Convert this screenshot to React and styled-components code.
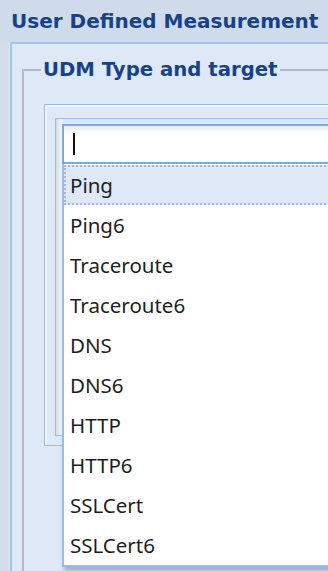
import React from "react";
import styled, { createGlobalStyle } from "styled-components";

const Global = createGlobalStyle`
  html, body {
    margin: 0;
    padding: 0;
    background: #dfe8f6;
  }
  body {
    font-family: "Noto Sans", "Open Sans", sans-serif;
  }
`;

const options = [
  "Ping",
  "Ping6",
  "Traceroute",
  "Traceroute6",
  "DNS",
  "DNS6",
  "HTTP",
  "HTTP6",
  "SSLCert",
  "SSLCert6",
];

export default function App() {
  return (
    <>
      <Global />
      <Page>
        <Header>
          <h1>User Defined Measurement</h1>
        </Header>
        <Body>
          <LeftStrip />
          <Panel>
            <FieldSet>
              <legend>UDM Type and target</legend>
              <OuterBox>
                <InnerBox>
                  <Gutter />
                  <Combo>
                    <Input>
                      <Caret />
                    </Input>
                    <List>
                      {options.map((o, i) => (
                        <Item key={o} selected={i === 0}>
                          {o}
                        </Item>
                      ))}
                    </List>
                  </Combo>
                </InnerBox>
              </OuterBox>
            </FieldSet>
          </Panel>
        </Body>
      </Page>
    </>
  );
}

const Page = styled.div`
  width: 328px;
  height: 571px;
  overflow: hidden;
  display: flex;
  flex-direction: column;
  background: #dfe8f6;
`;

const Header = styled.div`
  height: 42px;
  flex: none;
  background: #cfdbea;
  display: flex;
  align-items: center;
  padding-left: 11px;
  h1 {
    margin: 0;
    font-family: "DejaVu Sans", "Noto Sans", sans-serif;
    font-weight: bold;
    font-size: 20px;
    color: #15428b;
    white-space: nowrap;
  }
`;

const Body = styled.div`
  flex: 1;
  display: flex;
  min-height: 0;
`;

const LeftStrip = styled.div`
  width: 9px;
  flex: none;
  background: #d3dce8;
  border-right: 1px solid #e2e9f3;
`;

const Panel = styled.div`
  flex: 1;
  min-width: 0;
  background: #dfe8f6;
  border-left: 2px solid #a6c4ea;
  border-top: 2px solid #a6c4ea;
  padding: 13px 0 0 10px;
`;

const FieldSet = styled.fieldset`
  margin: 0;
  border: 2px solid #b5b9c6;
  border-right: none;
  border-bottom: none;
  padding: 21px 0 0 20px;
  min-width: 0;
  height: 600px;
  legend {
    margin-left: -3px;
    padding: 0 2px;
    font-family: "DejaVu Sans", "Noto Sans", sans-serif;
    font-weight: bold;
    font-size: 19.7px;
    line-height: 26px;
    color: #15428b;
    white-space: nowrap;
  }
`;

const OuterBox = styled.div`
  height: 342px;
  border: 1px solid #99bbe8;
  border-right: none;
  box-shadow: inset 2px 2px 0 #f1f5fb;
  padding: 13px 0 0 10px;
  box-sizing: border-box;
`;

const InnerBox = styled.div`
  height: 318px;
  box-sizing: border-box;
  border: 1px solid #99bbe8;
  border-right: none;
  display: flex;
  align-items: flex-start;
  padding-top: 5px;
`;

const Gutter = styled.div`
  width: 6px;
  flex: none;
  align-self: stretch;
  margin-top: -5px;
  background: linear-gradient(to right, #d3dae4, #f7f9fc);
`;

const Combo = styled.div`
  position: relative;
  flex: 1;
  margin-right: -20px;
`;

const Input = styled.div`
  height: 36px;
  border: 2px solid #7eaad9;
  background: linear-gradient(to bottom, #e7ecf2 0, #ffffff 9px, #ffffff 100%);
  display: flex;
  align-items: center;
  padding-left: 9px;
`;

const Caret = styled.span`
  width: 2px;
  height: 22px;
  background: #111;
`;

const List = styled.div`
  position: absolute;
  top: 100%;
  left: 0;
  right: 0;
  background: #fff;
  border: 2px solid #99bbe8;
  border-top: none;
  padding-top: 1px;
  box-shadow: 2px 4px 4px rgba(0, 0, 0, 0.25);
`;

const Item = styled.div`
  height: 40px;
  box-sizing: border-box;
  display: flex;
  align-items: center;
  padding-left: 4px;
  font-family: "Noto Sans", "Open Sans", sans-serif;
  font-size: 20.5px;
  color: #1e1e1e;
  background: ${(p) => (p.selected ? "#dfe8f6" : "#fff")};
  border: 2px dotted ${(p) => (p.selected ? "#a3bae9" : "transparent")};
`;
